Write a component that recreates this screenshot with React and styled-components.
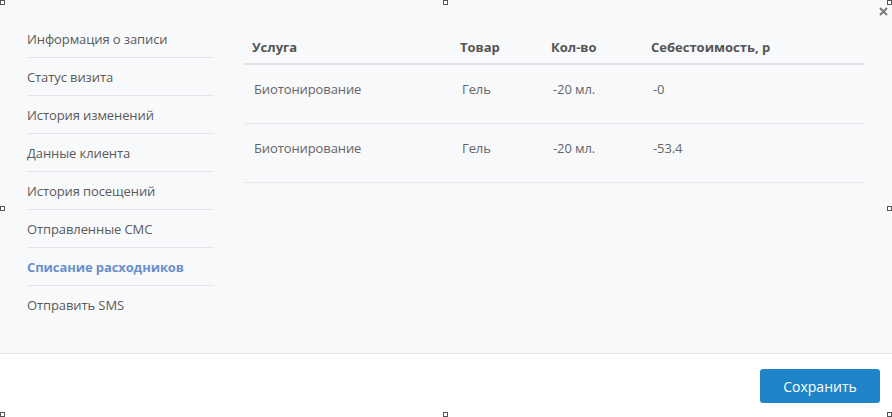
import React from "react";
import styled, { createGlobalStyle } from "styled-components";

const GlobalStyle = createGlobalStyle`
  html, body {
    margin: 0;
    padding: 0;
    background: #ffffff;
  }

  body {
    font-family: "Open Sans", "Noto Sans", sans-serif;
    font-size: 13px;
    color: #555;
  }
`;

const Page = styled.div`
  position: relative;
  display: flex;
  flex-flow: column nowrap;
  width: 892px;
  height: 417px;
  overflow: hidden;
`;

const Body = styled.div`
  display: flex;
  flex-flow: row nowrap;
  height: 354px;
  padding: 20px 27px 0;
  box-sizing: border-box;
  background-color: #f8f9fb;
  border-bottom: 1px solid #e2e3e5;
`;

const Menu = styled.ul`
  list-style-type: none;
  flex: 0 0 187px;
  margin: 0 30px 0 0;
  padding: 0;
`;

const MenuItem = styled.li`
  padding: 10px 0 9px;
  line-height: 18px;
  font-size: 13px;
  letter-spacing: -0.1px;
  color: ${({ active }) => (active ? "#6a8fcb" : "#5a5a5a")};
  font-weight: ${({ active }) => (active ? 700 : 400)};
  border-bottom: 1px solid #e4e5e8;
  white-space: nowrap;

  &:last-child {
    border-bottom: none;
  }
`;

const Table = styled.table`
  width: 621px;
  flex: 0 0 621px;
  align-self: flex-start;
  border-collapse: collapse;
  table-layout: fixed;
`;

const HeadCell = styled.th`
  padding: 18px 8px 7px;
  line-height: 18px;
  font-size: 13px;
  font-weight: 700;
  color: #555;
  text-align: left;
  border-bottom: 2px solid #e0e1e4;
`;

const Cell = styled.td`
  padding: 15px 10px 25px;
  line-height: 18px;
  font-size: 13px;
  letter-spacing: -0.1px;
  color: #666;
  border-bottom: 1px solid #e6e7ea;
`;

const Footer = styled.div`
  display: flex;
  justify-content: flex-end;
  align-items: flex-start;
  flex: 1 1 auto;
  padding: 15px 12px 0 0;
  background-color: #ffffff;
`;

const SaveButton = styled.button`
  width: 120px;
  height: 34px;
  border: none;
  border-radius: 3px;
  background-color: #1f84c7;
  color: #ffffff;
  font-family: "Open Sans", "Noto Sans", sans-serif;
  font-size: 14px;
  cursor: pointer;
`;

const Close = styled.svg`
  position: absolute;
  top: 7px;
  right: 4px;
  width: 9px;
  height: 9px;
`;

const Handle = styled.span`
  position: absolute;
  width: 5px;
  height: 5px;
  box-sizing: border-box;
  border: 1px solid #555;
  background: #fff;
  left: ${({ x }) => x}px;
  top: ${({ y }) => y}px;
`;

const menu = [
  "Информация о записи",
  "Статус визита",
  "История изменений",
  "Данные клиента",
  "История посещений",
  "Отправленные СМС",
  "Списание расходников",
  "Отправить SMS",
];

const columns = [
  { title: "Услуга", width: 208 },
  { title: "Товар", width: 91 },
  { title: "Кол-во", width: 100 },
  { title: "Себестоимость, р", width: 222 },
];

const rows = [
  { service: "Биотонирование", product: "Гель", qty: "-20 мл.", cost: "-0" },
  { service: "Биотонирование", product: "Гель", qty: "-20 мл.", cost: "-53.4" },
];

const handles = [
  [0, 0],
  [443, 0],
  [887, 0],
  [0, 206],
  [887, 206],
  [0, 412],
  [443, 412],
  [887, 412],
];

function App() {
  return (
    <Page>
      <GlobalStyle />
      <Body>
        <Menu>
          {menu.map((item) => (
            <MenuItem key={item} active={item === "Списание расходников"}>
              {item}
            </MenuItem>
          ))}
        </Menu>
        <Table>
          <colgroup>
            {columns.map((col) => (
              <col key={col.title} style={{ width: col.width }} />
            ))}
          </colgroup>
          <thead>
            <tr>
              {columns.map((col) => (
                <HeadCell key={col.title}>{col.title}</HeadCell>
              ))}
            </tr>
          </thead>
          <tbody>
            {rows.map((row, i) => (
              <tr key={i}>
                <Cell>{row.service}</Cell>
                <Cell>{row.product}</Cell>
                <Cell>{row.qty}</Cell>
                <Cell>{row.cost}</Cell>
              </tr>
            ))}
          </tbody>
        </Table>
      </Body>
      <Footer>
        <SaveButton>Сохранить</SaveButton>
      </Footer>
      <Close viewBox="0 0 9 9">
        <path d="M1 1L8 8M8 1L1 8" stroke="#7a7a7a" strokeWidth="2" />
      </Close>
      {handles.map(([x, y]) => (
        <Handle key={`${x}-${y}`} x={x} y={y} />
      ))}
    </Page>
  );
}

export default App;
